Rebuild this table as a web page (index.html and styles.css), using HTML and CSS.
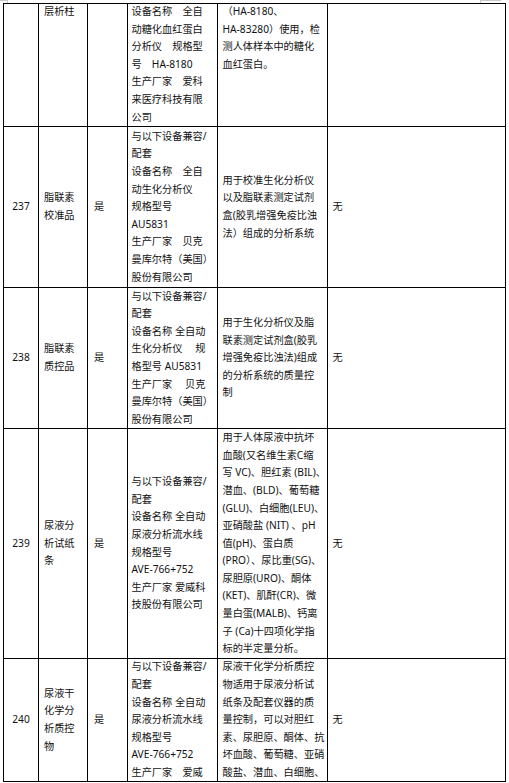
FILE: index.html
```html
<!DOCTYPE html>
<html lang="zh-CN">
<head>
<meta charset="utf-8">
<title>设备兼容表</title>
<link rel="stylesheet" href="styles.css">
</head>
<body>
<div class="page">
  <span class="mark mark-tl"></span>
  <span class="mark mark-tr"></span>
  <div class="sheet">
    <!-- continued row -->
    <div class="cell c1 top"></div>
    <div class="cell c2 top"><p class="shift">层析柱</p></div>
    <div class="cell c3 top"></div>
    <div class="cell c4 top"><p class="shift">设备名称　全自<br>动糖化血红蛋白<br>分析仪　规格型<br>号　HA-8180<br>生产厂家　爱科<br>来医疗科技有限<br>公司</p></div>
    <div class="cell c5 top"><p class="shift">（HA-8180、<br>HA-83280）使用，检<br>测人体样本中的糖化<br>血红蛋白。</p></div>
    <div class="cell c6 top"></div>

    <!-- 237 -->
    <div class="cell c1">237</div>
    <div class="cell c2"><p>脂联素<br>校准品</p></div>
    <div class="cell c3">是</div>
    <div class="cell c4"><p>与以下设备兼容/<br>配套<br>设备名称　全自<br>动生化分析仪<br>规格型号<br>AU5831<br>生产厂家　贝克<br>曼库尔特（美国）<br>股份有限公司</p></div>
    <div class="cell c5"><p>用于校准生化分析仪<br>以及脂联素测定试剂<br>盒(胶乳增强免疫比浊<br>法）组成的分析系统</p></div>
    <div class="cell c6">无</div>

    <!-- 238 -->
    <div class="cell c1">238</div>
    <div class="cell c2"><p>脂联素<br>质控品</p></div>
    <div class="cell c3">是</div>
    <div class="cell c4"><p>与以下设备兼容/<br>配套<br>设备名称 全自动<br>生化分析仪　 规<br>格型号 AU5831<br>生产厂家　 贝克<br>曼库尔特（美国）<br>股份有限公司</p></div>
    <div class="cell c5"><p>用于生化分析仪及脂<br>联素测定试剂盒(胶乳<br>增强免疫比浊法)组成<br>的分析系统的质量控<br>制</p></div>
    <div class="cell c6">无</div>

    <!-- 239 -->
    <div class="cell c1">239</div>
    <div class="cell c2"><p>尿液分<br>析试纸<br>条</p></div>
    <div class="cell c3">是</div>
    <div class="cell c4"><p>与以下设备兼容/<br>配套<br>设备名称 全自动<br>尿液分析流水线<br>规格型号<br>AVE-766+752<br>生产厂家 爱威科<br>技股份有限公司</p></div>
    <div class="cell c5"><p>用于人体尿液中抗坏<br>血酸(又名维生素C缩<br>写 VC)、胆红素 (BIL)、<br>潜血、(BLD)、葡萄糖<br>(GLU)、白细胞(LEU)、<br>亚硝酸盐 (NIT) 、pH<br>值(pH)、蛋白质<br>(PRO）、尿比重(SG)、<br>尿胆原(URO)、酮体<br>(KET)、肌酐(CR)、微<br>量白蛋(MALB)、钙离<br>子 (Ca)十四项化学指<br>标的半定量分析。</p></div>
    <div class="cell c6">无</div>

    <!-- 240 -->
    <div class="cell c1">240</div>
    <div class="cell c2"><p>尿液干<br>化学分<br>析质控<br>物</p></div>
    <div class="cell c3">是</div>
    <div class="cell c4"><p>与以下设备兼容/<br>配套<br>设备名称 全自动<br>尿液分析流水线<br>规格型号<br>AVE-766+752<br>生产厂家　爱威</p></div>
    <div class="cell c5"><p>尿液干化学分析质控<br>物适用于尿液分析试<br>纸条及配套仪器的质<br>量控制，可以对胆红<br>素、尿胆原、酮体、抗<br>坏血酸、葡萄糖、亚硝<br>酸盐、潜血、白细胞、</p></div>
    <div class="cell c6">无</div>
  </div>
</div>
</body>
</html>
```

FILE: styles.css
```css
html, body {
  margin: 0;
  padding: 0;
  background: #ffffff;
}

.page {
  position: relative;
  width: 509px;
  height: 783px;
  overflow: hidden;
  font-family: "Noto Sans", "Noto Sans CJK SC", sans-serif;
  font-size: 10.2px;
  line-height: 17.6px;
  color: #111111;
}

.mark {
  position: absolute;
  border-color: #c8c8c8;
  border-style: solid;
  border-width: 0;
}

.mark-tl {
  left: 0;
  top: 0;
  width: 7px;
  height: 2px;
  border-top-width: 1px;
  border-right-width: 1px;
}

.mark-tr {
  left: 480px;
  top: 0;
  width: 20px;
  height: 2px;
  border-left-width: 1px;
  border-top-width: 1px;
}

.sheet {
  display: grid;
  grid-template-columns: 35px 49px 40px 90px 110px 178px;
  grid-template-rows: 123px 161px 141px 230px 123px;
  width: max-content;
  margin: 3px 0 0 3px;
  border-left: 1px solid #000;
  border-top: 1px solid #000;
}

.cell {
  box-sizing: border-box;
  display: flex;
  flex-direction: column;
  justify-content: center;
  border-right: 1px solid #000;
  border-bottom: 1px solid #000;
  padding: 0 4px 0 5px;
  white-space: nowrap;
  min-width: 0;
}

.cell p {
  margin: 0;
}

.cell.top {
  justify-content: flex-start;
}

.shift {
  margin-top: -1px !important;
}

.c1 {
  align-items: center;
  padding: 0;
}

.c3 {
  padding-left: 6px;
}

.c4 {
  padding-left: 3.5px;
  padding-right: 2px;
}

.c5 {
  padding-left: 4.5px;
  padding-right: 2px;
}

.c6 {
  padding-left: 4.5px;
}
```
